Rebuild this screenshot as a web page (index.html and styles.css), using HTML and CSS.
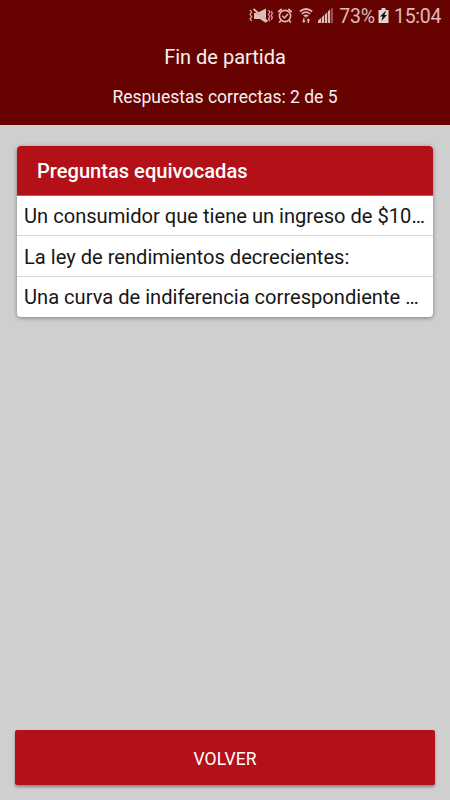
FILE: index.html
```html
<!DOCTYPE html>
<html lang="es">
<head>
    <meta charset="UTF-8">
    <title>Fin de partida</title>
    <link rel="stylesheet" href="styles.css">
</head>
<body>
    <div class="header">
        <div class="status">
            <svg class="mute" width="24" height="18" viewBox="0 0 24 18">
                <path d="M9 5.500l8-4v10.500zM5 6h2.500L17 13.500V16l-6-4H5z" fill="#e0bcbc"/>
                <path d="M4.500 2l14 12.500" stroke="#e0bcbc" stroke-width="1.800"/>
                <path d="M1 3l1.700 2.200L1 7.500l1.700 2.200L1 12l1.700 2.200M19.500 3l1.300 2.200-1.300 2.300 1.300 2.200-1.300 2.300 1.300 2.200M22.300 4l1 2.200-1 2.200 1 2.200-1 2.200" fill="none" stroke="#d0a4a4" stroke-width="1.300"/>
            </svg>
            <svg class="alarm" width="16" height="18" viewBox="0 0 16 18">
                <circle cx="8" cy="9" r="5.600" fill="none" stroke="#dfbaba" stroke-width="1.600"/>
                <path d="M1.300 5l3.400-3M11.300 2l3.400 3M3.800 13.500l-1.600 2M12.200 13.500l1.600 2" stroke="#dfbaba" stroke-width="1.700"/>
                <path d="M5.200 8.800l2.300 2.200 3.400-4" fill="none" stroke="#dfbaba" stroke-width="1.500"/>
            </svg>
            <svg class="wifi" width="14" height="18" viewBox="0 0 14 18">
                <path d="M.8 4.500q6.200-5 12.400 0M2.800 6.900q4.200-3.400 8.400 0M4.800 9.200q2.200-1.800 4.400 0" fill="none" stroke="#dfbaba" stroke-width="1.700"/>
                <path d="M5.800 9.400h2.400L7 10.900z" fill="#dfbaba"/>
                <path d="M4.800 16l-2-2.300h1.300V11.300h1.400v2.400h1.300zM9.400 11.300l2 2.300h-1.300V16H8.700v-2.400H7.400z" fill="#dfbaba"/>
            </svg>
            <svg class="signal" width="16" height="18" viewBox="0 0 16 18">
                <path d="M0 13.500l3-2.500v5H0zM3.700 10.500L6 8v8H3.700zM6.800 7.500L9 5.500V16H6.800zM9.800 4.500L12 2.500V16H9.800z" fill="#dfbaba"/>
                <path d="M12.600 2L15 .5V16h-2.400z" fill="#985050"/>
            </svg>
            <span class="percent">73%</span>
            <svg class="battery" width="11" height="18" viewBox="0 0 10 18">
                <path d="M3 1h4v2h3v13H0V3h3z" fill="#e8d2d2"/>
                <path d="M7 4L1.500 9.500H4L3 14l5.500-6H6L7.500 4z" fill="#111"/>
            </svg>
            <span class="clock">15:04</span>
        </div>
        <h1 class="title">Fin de partida</h1>
        <p class="score">Respuestas correctas: 2 de 5</p>
    </div>
    <div class="card">
        <h2 class="card-title">Preguntas equivocadas</h2>
        <ul class="list">
            <li>Un consumidor que tiene un ingreso de $10…</li>
            <li>La ley de rendimientos decrecientes:</li>
            <li>Una curva de indiferencia correspondiente …</li>
        </ul>
    </div>
    <button class="back">VOLVER</button>
</body>
</html>
```

FILE: styles.css
```css
*{
    padding: 0;
    margin: 0;
    box-sizing: border-box;
}
body{
    height: 800px;
    display: flex;
    flex-direction: column;
    background: #cfcfcf;
    font-family: Roboto, "Liberation Sans", sans-serif;
    overflow: hidden;
}
.header{
    height: 125px;
    background: #660200;
    color: #f8f0f0;
    text-align: center;
}
.status{
    height: 32px;
    padding-right: 9px;
    display: flex;
    align-items: center;
    justify-content: flex-end;
    color: #dfbaba;
    font-size: 19.5px;
    letter-spacing: -.3px;
}
.status span{
    height: 32px;
    line-height: 34px;
}
.status svg{
    flex: none;
}
.alarm{
    margin-left: 4px;
}
.wifi{
    margin-left: 6px;
}
.signal{
    margin-left: 5px;
}
.percent{
    width: 36px;
    margin-left: 5px;
    white-space: nowrap;
}
.battery{
    margin-left: 3px;
}
.clock{
    width: 47px;
    margin-left: 5px;
}
.title{
    margin-top: 12px;
    font-size: 20px;
    font-weight: 400;
    line-height: 26px;
}
.score{
    margin-top: 15px;
    font-size: 17.5px;
    line-height: 25px;
}
.card{
    margin: 21px 17px 0;
    border-radius: 4px;
    background: #fff;
    box-shadow: 0 1px 4px rgba(0, 0, 0, .4);
    overflow: hidden;
}
.card-title{
    height: 50px;
    padding-left: 20px;
    background: #b31018;
    color: #fff;
    font-size: 20.1px;
    font-weight: 500;
    line-height: 51px;
    border-bottom: 1px solid #c6565b;
}
.list{
    list-style: none;
}
.list li{
    height: 40px;
    padding-left: 7px;
    color: #161616;
    font-size: 20.13px;
    line-height: 41px;
    white-space: nowrap;
    border-bottom: 1px solid #d6d6d6;
}
.list li:nth-child(2){
    height: 41px;
    line-height: 43px;
}
.list li:last-child{
    border-bottom: none;
}
.back{
    height: 55px;
    margin: auto 15px 15px;
    padding-top: 2px;
    border: none;
    border-radius: 2px;
    background: #b31018;
    color: #fff;
    font-family: inherit;
    font-size: 17.5px;
    box-shadow: 0 2px 3px rgba(0, 0, 0, .35);
}
```
